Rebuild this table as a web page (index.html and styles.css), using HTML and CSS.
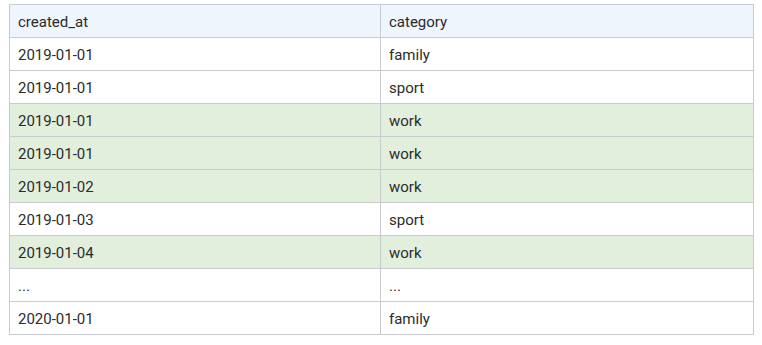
FILE: index.html
```html
<!DOCTYPE html>
<html>
<head>
<meta charset="utf-8">
<link rel="stylesheet" href="styles.css">
</head>
<body>
<table class="data">
  <thead>
    <tr><th class="c1">created_at</th><th>category</th></tr>
  </thead>
  <tbody>
    <tr><td>2019-01-01</td><td>family</td></tr>
    <tr><td>2019-01-01</td><td>sport</td></tr>
    <tr class="hl"><td>2019-01-01</td><td>work</td></tr>
    <tr class="hl"><td>2019-01-01</td><td>work</td></tr>
    <tr class="hl"><td>2019-01-02</td><td>work</td></tr>
    <tr><td>2019-01-03</td><td>sport</td></tr>
    <tr class="hl"><td>2019-01-04</td><td>work</td></tr>
    <tr><td>...</td><td>...</td></tr>
    <tr><td>2020-01-01</td><td>family</td></tr>
  </tbody>
</table>
</body>
</html>
```
FILE: styles.css
```css
html, body {
  margin: 0;
  background: #ffffff;
}
body {
  padding: 4px 8px 0 9px;
  font-family: Roboto, "Liberation Sans", sans-serif;
  font-size: 15px;
  color: #2b2b2b;
}
.data {
  border-collapse: collapse;
  width: 745px;
  table-layout: fixed;
}
.data th, .data td {
  border: 1px solid #c9cbd0;
  padding: 7px 8px 5px;
  line-height: 20px;
  text-align: left;
  font-weight: 400;
  height: 20px;
}
.data th.c1 {
  width: 354px;
}
.data thead th {
  background: #eef5fd;
}
.data tr.hl td {
  background: #e2efdd;
}
```
